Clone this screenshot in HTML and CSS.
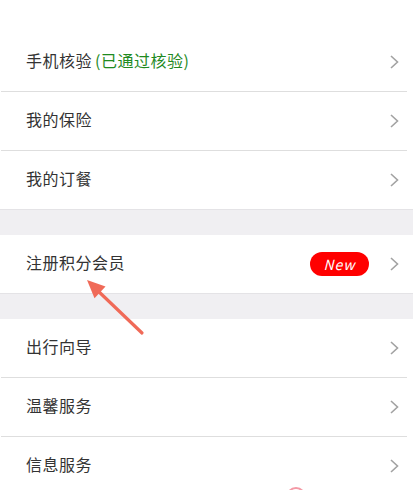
FILE: index.html
```html
<!DOCTYPE html>
<html lang="zh">

<head>
	<meta charset="UTF-8">
	<title>我的</title>
	<link rel="stylesheet" href="styles.css">
</head>

<body>
	<div class="page">
		<div class="top-space"></div>

		<div class="group">
			<div class="row">
				<div class="row-inner">
					<span class="label">手机核验<span class="ok">(已通过核验)</span></span>
					<svg class="chevron" viewBox="0 0 9 14"><path d="M1 1 L7.5 7 L1 13" /></svg>
				</div>
			</div>
			<div class="row">
				<div class="row-inner">
					<span class="label">我的保险</span>
					<svg class="chevron" viewBox="0 0 9 14"><path d="M1 1 L7.5 7 L1 13" /></svg>
				</div>
			</div>
			<div class="row">
				<div class="row-inner last">
					<span class="label">我的订餐</span>
					<svg class="chevron" viewBox="0 0 9 14"><path d="M1 1 L7.5 7 L1 13" /></svg>
				</div>
			</div>
		</div>

		<div class="gap"></div>

		<div class="group">
			<div class="row">
				<div class="row-inner last">
					<span class="label">注册积分会员</span>
					<span class="badge">New</span>
					<svg class="chevron" viewBox="0 0 9 14"><path d="M1 1 L7.5 7 L1 13" /></svg>
				</div>
			</div>
		</div>

		<div class="gap"></div>

		<div class="group">
			<div class="row">
				<div class="row-inner">
					<span class="label">出行向导</span>
					<svg class="chevron" viewBox="0 0 9 14"><path d="M1 1 L7.5 7 L1 13" /></svg>
				</div>
			</div>
			<div class="row">
				<div class="row-inner">
					<span class="label">温馨服务</span>
					<svg class="chevron" viewBox="0 0 9 14"><path d="M1 1 L7.5 7 L1 13" /></svg>
				</div>
			</div>
			<div class="row">
				<div class="row-inner">
					<span class="label">信息服务</span>
					<svg class="chevron" viewBox="0 0 9 14"><path d="M1 1 L7.5 7 L1 13" /></svg>
				</div>
			</div>
		</div>

		<!-- annotation drawn over the list -->
		<svg class="marks" viewBox="0 0 413 490">
			<line x1="142" y1="333" x2="96" y2="289" />
			<polygon points="87,280 105.5,286.6 94.5,298.2" />
			<circle class="dot" cx="296" cy="497" r="9" />
		</svg>
	</div>
</body>

</html>
```

FILE: styles.css
```css
/*
  List page styles.
*/
body {
	margin: 0;
	background: #fff;
	font-family: "Noto Sans CJK SC", "Noto Sans", sans-serif;
	color: #333;
}

.page {
	position: relative;
	width: 413px;
	height: 490px;
	overflow: hidden;
}

.top-space {
	height: 33px;
}

.gap {
	height: 25px;
	background: #f0eff2;
	border-top: 1px solid #e4e3e6;
}

.group {
	background: #fff;
}

.row-inner {
	display: flex;
	align-items: center;
	height: 58px;
	margin: 0 6px 0 1px;
	padding: 0 8px 0 25px;
	border-bottom: 1px solid #dedede;
}

.row-inner.last {
	border-bottom: none;
}

.label {
	flex: 1;
	font-size: 16px;
	letter-spacing: 0.5px;
	margin-bottom: 4px;
}

.ok {
	color: #1f8a1f;
	margin-left: 3px;
}

.badge {
	width: 59px;
	height: 24px;
	line-height: 24px;
	border-radius: 12px;
	background: #ff0000;
	color: #fff;
	text-align: center;
	font-size: 14px;
	font-style: italic;
	letter-spacing: 1px;
	margin-right: 21px;
}

.chevron {
	width: 9px;
	height: 14px;
	fill: none;
	stroke: #a2a2a2;
	stroke-width: 1.6;
}

.marks {
	position: absolute;
	left: 0;
	top: 0;
	width: 413px;
	height: 490px;
	pointer-events: none;
}

.marks line {
	stroke: #f06a58;
	stroke-width: 3.2;
	stroke-linecap: round;
}

.marks polygon {
	fill: #f06a58;
}

.marks .dot {
	fill: none;
	stroke: #f49aa6;
	stroke-width: 2;
}
```
